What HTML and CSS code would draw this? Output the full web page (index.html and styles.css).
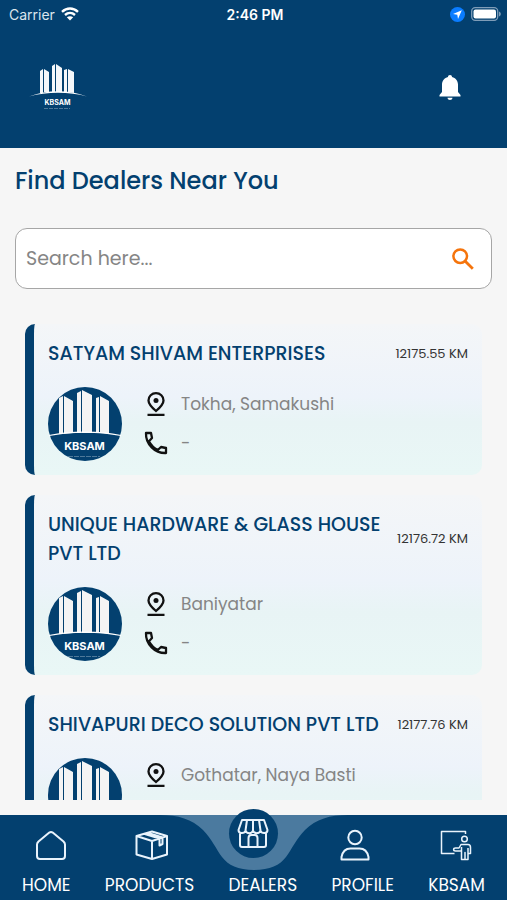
FILE: index.html
```html
<!DOCTYPE html>
<html lang="en">
<head>
<meta charset="utf-8">
<meta name="viewport" content="width=device-width, initial-scale=1">
<title>KBSAM Dealers</title>
<link rel="stylesheet" href="styles.css">
</head>
<body>
<svg class="defs" aria-hidden="true">
  <symbol id="towers" viewBox="0 0 74 60">
    <path fill="#f4f4f4" d="M11 11l4-2v38h-4zM16 9l9 5v32l-9 1zM29 6l4-2v42h-4zM34 3l10 5v38H34zM48 11l3-1v36h-3zM52 9l9 5v33l-9-1z"/>
  </symbol>
  <symbol id="pin" viewBox="0 0 24 24">
    <path fill="none" stroke="#111" stroke-width="2.300" d="M12 1.200c-4.200 0-7.500 3.100-7.500 7.200 0 3.600 3.500 7.100 7.500 10.600 4-3.500 7.500-7 7.500-10.600C19.500 4.300 16.200 1.200 12 1.200zM3.500 22.800h17"/>
    <circle cx="12" cy="8.500" r="2.500" fill="#111"/>
  </symbol>
  <symbol id="phone" viewBox="0 0 24 24">
    <path fill="none" stroke="#111" stroke-width="2.300" stroke-linejoin="round" d="M2 2h5l1 5-3 3.200c2 4 4.800 6.800 8.800 8.800l3.200-3 5 1v5C11 22.500 1.500 13 2 2z"/>
  </symbol>
</svg>

<header class="header">
  <div class="status">
    <div class="status-left">
      <span>Carrier</span>
      <svg width="18" height="14" viewBox="0 0 18 14" fill="none" stroke="#fff" stroke-width="2.400"><path d="M1 4.800c4.800-4.400 11.200-4.400 16 0M4 8c3-2.700 7-2.700 10 0"/><path fill="#fff" stroke="none" d="M9 13.500L5.800 10.300c2-1.500 4.400-1.500 6.400 0z"/></svg>
    </div>
    <time class="status-time">2:46 PM</time>
    <div class="status-right">
      <svg width="15" height="15" viewBox="0 0 15 15"><circle cx="7.500" cy="7.500" r="7.500" fill="#0a7cff"/><path fill="#fff" d="M11.800 3.200L3 7.100l4.300.6.700 4.300z"/></svg>
      <svg width="30" height="14" viewBox="0 0 30 14"><rect x=".7" y=".7" width="26" height="12.600" rx="3.500" fill="none" stroke="#7f9db8" stroke-width="1.300"/><rect x="2.500" y="2.500" width="22.500" height="9" rx="2" fill="#fff"/><path fill="#7f9db8" d="M28 4.500c2.400.8 2.400 4.200 0 5z"/></svg>
    </div>
  </div>
  <div class="appbar">
    <svg class="brand" viewBox="0 0 58 50" role="img" aria-label="KBSAM">
      <path fill="#f4f7fa" d="M11 8l3-2v24h-3zM15 6l5 3v20h-5zM23 3l3-2v28h-3zM27 1l6 4v24h-6zM35 7l3-1v23h-3zM39 6l6 3v21l-6-1z"/>
      <path fill="#fff" d="M0 33.500C18 26.500 40 26.500 58 33.500 40 28.500 18 28.500 0 33.500z"/>
      <text class="brand-name" x="28.500" y="41.500">KBSAM</text>
      <path stroke="#4d7899" d="M15 45.500h26" stroke-dasharray="4 1"/>
    </svg>
    <button class="bell" type="button" aria-label="Notifications">
      <svg width="22" height="26" viewBox="0 0 22 26" fill="#fff"><path d="M11 0c1.300 0 2 .8 2 2 3.600 1 6 3.800 6 7.500V17l2.500 3v1.500H.5V20L3 17V9.500C3 5.800 5.400 3 9 2c0-1.200.7-2 2-2zM8.500 22.800h5c-.2 3-4.800 3-5 0z"/></svg>
    </button>
  </div>
</header>

<main class="main">
  <h1 class="heading">Find Dealers Near You</h1>
  <form class="search" role="search">
    <input class="search-input" type="text" placeholder="Search here..." aria-label="Search dealers">
    <button class="search-button" type="button" aria-label="Search">
      <svg width="22" height="22" viewBox="0 0 22 22" fill="none" stroke="#f5740c" stroke-width="2.500"><circle cx="8.200" cy="8.200" r="6.800"/><path d="M13 13l7.800 7.800" stroke-width="2.800"/></svg>
    </button>
  </form>

  <div class="list">
    <article class="card">
      <div class="card-head"><h2 class="card-title">SATYAM SHIVAM ENTERPRISES</h2><span class="distance">12175.55 KM</span></div>
      <div class="card-body">
        <svg class="avatar" viewBox="0 0 74 74" role="img" aria-label="KBSAM"><circle cx="37" cy="37" r="37" fill="#03406f"/><use href="#towers" width="74" height="60"/><path fill="none" stroke="#fff" stroke-width="1.200" d="M1 48.500c22-4.500 50-4.500 72 0"/><text class="avatar-name" x="36.500" y="63">KBSAM</text><path stroke="#4d7899" stroke-dasharray="5 1" d="M20 69.500h32"/></svg>
        <ul class="info">
          <li><svg class="icon" aria-hidden="true"><use href="#pin"/></svg>Tokha, Samakushi</li>
          <li><svg class="icon" aria-hidden="true"><use href="#phone"/></svg>-</li>
        </ul>
      </div>
    </article>
    <article class="card">
      <div class="card-head"><h2 class="card-title">UNIQUE HARDWARE &amp; GLASS HOUSE PVT LTD</h2><span class="distance">12176.72 KM</span></div>
      <div class="card-body">
        <svg class="avatar" viewBox="0 0 74 74" role="img" aria-label="KBSAM"><circle cx="37" cy="37" r="37" fill="#03406f"/><use href="#towers" width="74" height="60"/><path fill="none" stroke="#fff" stroke-width="1.200" d="M1 48.500c22-4.500 50-4.500 72 0"/><text class="avatar-name" x="36.500" y="63">KBSAM</text><path stroke="#4d7899" stroke-dasharray="5 1" d="M20 69.500h32"/></svg>
        <ul class="info">
          <li><svg class="icon" aria-hidden="true"><use href="#pin"/></svg>Baniyatar</li>
          <li><svg class="icon" aria-hidden="true"><use href="#phone"/></svg>-</li>
        </ul>
      </div>
    </article>
    <article class="card">
      <div class="card-head"><h2 class="card-title">SHIVAPURI DECO SOLUTION PVT LTD</h2><span class="distance">12177.76 KM</span></div>
      <div class="card-body">
        <svg class="avatar" viewBox="0 0 74 74" role="img" aria-label="KBSAM"><circle cx="37" cy="37" r="37" fill="#03406f"/><use href="#towers" width="74" height="60"/><path fill="none" stroke="#fff" stroke-width="1.200" d="M1 48.500c22-4.500 50-4.500 72 0"/></svg>
        <ul class="info">
          <li><svg class="icon" aria-hidden="true"><use href="#pin"/></svg>Gothatar, Naya Basti</li>
        </ul>
      </div>
    </article>
  </div>
</main>

<nav class="nav" aria-label="Main">
  <svg class="notch" viewBox="0 0 188 55" aria-hidden="true"><path fill="#4b7a9f" d="M0 0C18 0 32 4 43 15 52 24 56 34 62 42 68 50 78 55 94 55S120 50 126 42C132 34 136 24 145 15 156 4 170 0 188 0z"/></svg>
  <div class="nav-icons">
    <a href="#home" aria-label="Home"><svg class="nav-icon" viewBox="0 0 34 34"><path d="M3 15.500Q3 14 4.500 12.500L15.300 3.600Q17 2.300 18.700 3.600L29.500 12.500Q31 14 31 15.500V27Q31 30 28 30H6Q3 30 3 27z"/></svg></a>
    <a href="#products" aria-label="Products"><svg class="nav-icon" viewBox="0 0 34 34"><path d="M17 2.500L32 7v18.500L17 30 1.500 25.500V7zM1.500 7L17 12l15-5M17 12v18M9 4.700L24.500 9.500v7l3-1.500V8.500L12.500 3.800"/></svg></a>
    <a class="active" href="#dealers" aria-label="Dealers"><svg class="nav-icon" viewBox="0 0 34 34"><path d="M6 3h22l3.500 10c0 4-6 4-7 .5-1 3.500-6.500 3.500-7.500 0-1 3.500-6.500 3.500-7.500 0-1 3.500-7 3.500-7-.5zM11 3L9.500 13.500M17 3v10.500M23 3l1.500 10.500M4 16v12q0 2 2 2h22q2 0 2-2V16M12.500 30v-9q0-3 3-3h3q3 0 3 3v9"/></svg></a>
    <a href="#profile" aria-label="Profile"><svg class="nav-icon" viewBox="0 0 34 34"><circle cx="17" cy="8.500" r="6.700"/><path d="M3.500 30.500v-2.500c1-5 4-8.500 9-8.500h9c5 0 8 3.500 9 8.500v2.500z"/></svg></a>
    <a href="#kbsam" aria-label="KBSAM"><svg class="nav-icon thin" viewBox="0 0 34 34"><path d="M26.500 5V2.500H2.500v22h13M26.500 2.500v2"/><circle cx="25.500" cy="10" r="2.800"/><path d="M22 15.500h7c2 0 2.500 1 2.500 3v6h-2.500v6h-3v-7v7h-3.500V22h-6c-2.500 0-2.500-3 0-3h3.500zM22.500 18v4M29 19v6"/></svg></a>
  </div>
  <div class="nav-labels">
    <a href="#home">HOME</a><a href="#products">PRODUCTS</a><a href="#dealers">DEALERS</a><a href="#profile">PROFILE</a><a href="#kbsam">KBSAM</a>
  </div>
</nav>
</body>
</html>
```
FILE: styles.css
```css
* { box-sizing: border-box; }

body {
  margin: 0;
  height: 100vh;
  display: flex;
  flex-direction: column;
  background: #f6f6f6;
  font-family: Poppins, Inter, "Liberation Sans", sans-serif;
}

button { padding: 0; border: 0; background: none; display: flex; }
a { color: #fff; text-decoration: none; }
.defs { display: none; }

.header { background: #03406f; color: #fff; flex: none; }

.status {
  display: grid;
  grid-template-columns: 1fr auto 1fr;
  align-items: center;
  height: 28px;
  padding: 0 6px 0 9px;
  font-family: Inter, "Liberation Sans", sans-serif;
  font-size: 14px;
}
.status-left, .status-right { display: flex; align-items: center; gap: 6px; }
.status-left { color: #dbe5ed; }
.status-right { justify-content: flex-end; }
.status-time { font-weight: 600; }

.appbar {
  display: flex;
  align-items: center;
  justify-content: space-between;
  height: 120px;
  padding: 0 46px 0 29px;
}
.brand { width: 58px; height: 50px; }
.brand-name {
  font-family: Inter, "Liberation Sans", sans-serif;
  font-size: 7px;
  font-weight: 700;
  fill: #fff;
  text-anchor: middle;
}

.main {
  flex: 1;
  min-height: 0;
  display: flex;
  flex-direction: column;
  padding: 0 15px;
  margin-bottom: 15px;
}
.heading {
  margin: 15px 0 29px;
  font-size: 24px;
  line-height: 36px;
  font-weight: 500;
  color: #03406f;
}
.search {
  flex: none;
  display: flex;
  align-items: center;
  height: 61px;
  padding: 0 17px 0 10px;
  border: 1px solid #a6a6a6;
  border-radius: 12px;
  background: #fff;
}
.search-input {
  flex: 1;
  min-width: 0;
  padding: 0;
  border: 0;
  outline: 0;
  background: none;
  font: inherit;
  font-size: 19px;
}
.search-input::placeholder { color: #858585; opacity: 1; }

.list {
  flex: 1;
  min-height: 0;
  overflow: hidden;
  display: flex;
  flex-direction: column;
  gap: 20px;
  margin-top: 35px;
  padding: 0 10px;
}
.card {
  flex: none;
  padding: 15px 14px 14px;
  border-left: 9px solid #03406f;
  border-radius: 10px;
  background: linear-gradient(#f4f6f8, #edf3fa 48%, #e8f4f5 65%, #e9f7f6);
}
.card-head {
  display: flex;
  align-items: center;
  justify-content: space-between;
  gap: 8px;
  margin-bottom: 19px;
}
.card-title {
  margin: 0;
  font-size: 19px;
  line-height: 29px;
  font-weight: 500;
  color: #03406f;
}
.distance { flex: none; font-size: 13px; line-height: 20px; color: #333; }
.card-body { display: flex; gap: 22px; }
.avatar { flex: none; width: 74px; height: 74px; }
.avatar-name {
  font-family: Inter, "Liberation Sans", sans-serif;
  font-size: 11px;
  font-weight: 700;
  fill: #fff;
  text-anchor: middle;
}
.info {
  display: flex;
  flex-direction: column;
  gap: 5px;
  margin: 0;
  padding: 0;
  list-style: none;
  font-size: 17px;
  color: #858585;
}
.info li { display: flex; align-items: center; gap: 13px; height: 34px; }
.icon { width: 24px; height: 24px; }

.nav {
  position: relative;
  flex: none;
  height: 85px;
  background: #03406f;
}
.notch {
  position: absolute;
  top: 0;
  left: 50%;
  width: 188px;
  height: 55px;
  margin-left: -94px;
}
.nav-icons {
  position: relative;
  display: grid;
  grid-template-columns: repeat(5, 1fr);
  justify-items: center;
  height: 55px;
  align-items: center;
}
.nav-icons a {
  display: flex;
  align-items: center;
  justify-content: center;
  width: 49px;
  height: 49px;
  border-radius: 50%;
  margin-top: 6px;
}
.nav-icons .active { background: #03406f; margin-top: -18px; }
.nav-icon {
  width: 34px;
  height: 34px;
  fill: none;
  stroke: #e9f3fc;
  stroke-width: 2;
  stroke-linejoin: round;
}
.thin { stroke-width: 1.500; }
.nav-labels {
  display: flex;
  justify-content: space-between;
  padding: 0 22px;
  font-size: 17px;
  line-height: 30px;
}
```
